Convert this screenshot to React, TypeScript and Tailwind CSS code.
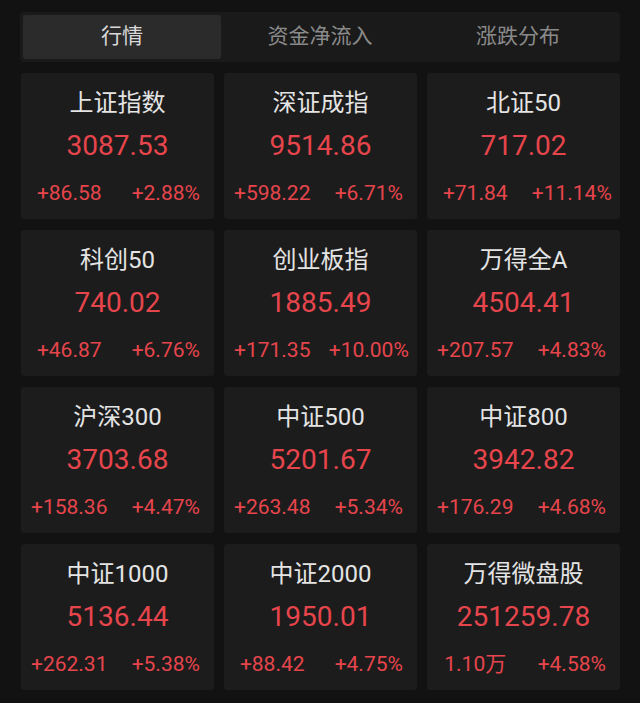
import React from "react";

const data: [string, string, string, string][] = [
  ["上证指数", "3087.53", "+86.58", "+2.88%"],
  ["深证成指", "9514.86", "+598.22", "+6.71%"],
  ["北证50", "717.02", "+71.84", "+11.14%"],
  ["科创50", "740.02", "+46.87", "+6.76%"],
  ["创业板指", "1885.49", "+171.35", "+10.00%"],
  ["万得全A", "4504.41", "+207.57", "+4.83%"],
  ["沪深300", "3703.68", "+158.36", "+4.47%"],
  ["中证500", "5201.67", "+263.48", "+5.34%"],
  ["中证800", "3942.82", "+176.29", "+4.68%"],
  ["中证1000", "5136.44", "+262.31", "+5.38%"],
  ["中证2000", "1950.01", "+88.42", "+4.75%"],
  ["万得微盘股", "251259.78", "1.10万", "+4.58%"],
];

export default function App() {
  return (
    <div
      className="w-[640px] h-[703px] bg-[#121212] px-[20px] pt-[12px] overflow-hidden"
      style={{ fontFamily: "Roboto, 'Noto Sans CJK SC', sans-serif" }}
    >
      <div className="h-[50px] bg-[#1a1a1a] rounded-[4px] p-[3px] grid grid-cols-3 text-[21px]">
        <div className="bg-[#2b2b2b] rounded-[3px] flex items-center justify-center text-[#d9d9d9]">
          行情
        </div>
        <div className="flex items-center justify-center text-[#8a8a8a]">资金净流入</div>
        <div className="flex items-center justify-center text-[#8a8a8a]">涨跌分布</div>
      </div>
      <div className="mt-[11px] grid grid-cols-3 gap-x-[10px] gap-y-[11px] pl-[1px]">
        {data.map(([name, value, chg, pct]) => (
          <div key={name} className="h-[146px] bg-[#1c1c1c] rounded-[3px] pt-[15px] flex flex-col">
            <div className="h-[30px] leading-[30px] text-center text-[24px] text-[#e4e4e4]">{name}</div>
            <div className="mt-[11px] h-[34px] leading-[34px] text-center text-[28px] text-[#e6454c]">
              {value}
            </div>
            <div className="mt-[16px] h-[28px] leading-[28px] grid grid-cols-2 text-[21px] text-[#e6454c]">
              <div className="text-center">{chg}</div>
              <div className="text-center">{pct}</div>
            </div>
          </div>
        ))}
      </div>
    </div>
  );
}
